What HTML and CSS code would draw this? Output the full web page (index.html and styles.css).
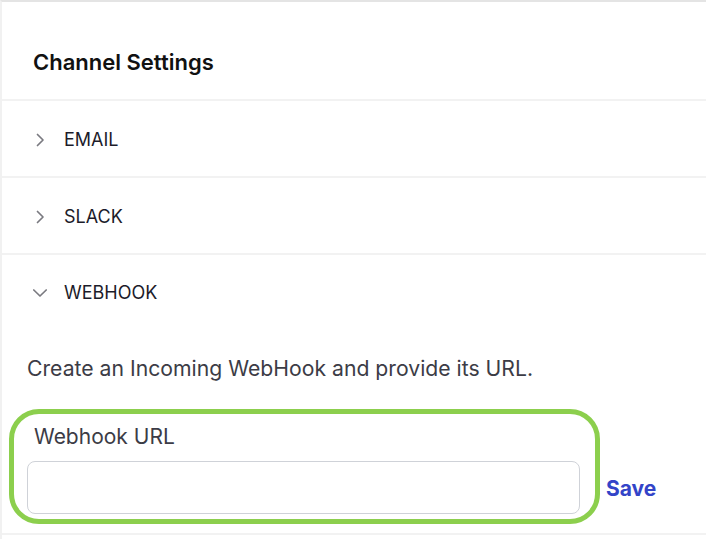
FILE: index.html
```html
<!DOCTYPE html>
<html lang="en">
<head>
<meta charset="utf-8">
<title>Channel Settings</title>
<link rel="stylesheet" href="styles.css">
</head>
<body>
<div class="panel">
  <div class="panel-header">
    <h2 class="title">Channel Settings</h2>
  </div>
  <div class="section">
    <div class="section-head">
      <svg class="chev" viewBox="0 0 14 14" width="14" height="14"><path d="M4.5 1.5 L10 7 L4.5 12.5" fill="none" stroke="#7a7a80" stroke-width="1.7" stroke-linecap="round" stroke-linejoin="round"/></svg>
      <span class="section-name">EMAIL</span>
    </div>
  </div>
  <div class="section">
    <div class="section-head">
      <svg class="chev" viewBox="0 0 14 14" width="14" height="14"><path d="M4.5 1.5 L10 7 L4.5 12.5" fill="none" stroke="#7a7a80" stroke-width="1.7" stroke-linecap="round" stroke-linejoin="round"/></svg>
      <span class="section-name">SLACK</span>
    </div>
  </div>
  <div class="section open">
    <div class="section-head">
      <svg class="chev" viewBox="0 0 14 14" width="14" height="14"><path d="M0.8 4 L7 10 L13.2 4" fill="none" stroke="#7a7a80" stroke-width="1.7" stroke-linecap="round" stroke-linejoin="round"/></svg>
      <span class="section-name">WEBHOOK</span>
    </div>
    <div class="section-body">
      <p class="desc">Create an Incoming WebHook and provide its URL.</p>
      <div class="form-row">
        <div class="field highlight">
          <label class="label" for="url">Webhook URL</label>
          <input class="input" id="url" type="text">
        </div>
        <button class="save" type="button">Save</button>
      </div>
    </div>
  </div>
</div>
</body>
</html>
```
FILE: styles.css
```css
* { box-sizing: border-box; }
html, body { margin: 0; padding: 0; background: #fff; }
body {
  font-family: Inter, "Noto Sans", "Liberation Sans", sans-serif;
  color: #1c1c24;
  width: 706px;
  height: 541px;
  overflow: hidden;
}
.panel {
  border-top: 2px solid #e4e4e4;
  border-left: 2px solid #f1f1f1;
  min-height: 539px;
}
.panel-header {
  height: 99px;
  display: flex;
  align-items: center;
  padding-left: 31px;
  padding-top: 22px;
  border-bottom: 2px solid #f2f2f2;
}
.title {
  margin: 0;
  font-size: 22px;
  font-weight: 600;
  color: #111;
}
.section {
  border-bottom: 2px solid #f2f2f2;
}
.section-head {
  height: 75px;
  display: flex;
  align-items: center;
  padding-left: 31px;
  padding-top: 2px;
}
.section.open .section-head { height: 75px; padding-top: 0; }
.chev {
  width: 14px;
  height: 14px;
  flex: none;
  margin-right: 17px;
}
.section-name {
  font-size: 18px;
  color: #1c1c2a;
}
.section-body {
  padding: 0 0 9px 0;
}
.desc {
  margin: 0;
  padding-left: 25px;
  font-size: 21.2px;
  line-height: 26px;
  color: #3c3c46;
  padding-top: 25px;
}
.form-row {
  display: flex;
  align-items: flex-end;
  margin-top: 28px;
  padding-left: 7px;
}
.field {
  width: 591px;
  display: flex;
  flex-direction: column;
  padding: 10px 15px 5px 13px;
}
.highlight {
  border: 5px solid #8ccf4d;
  border-radius: 30px;
}
.label {
  font-size: 21px;
  line-height: 26px;
  color: #3c3c46;
  padding-left: 7px;
  margin-bottom: 11px;
}
.input {
  height: 53px;
  width: 100%;
  border: 1.5px solid #cfd2d8;
  border-radius: 8px;
  background: #fff;
  font: inherit;
  outline: none;
}
.save {
  border: 0;
  background: none;
  padding: 0;
  margin: 0 0 10px 6px;
  height: 52px;
  font-family: inherit;
  font-size: 21px;
  font-weight: 700;
  color: #3344c8;
  cursor: pointer;
}
```
